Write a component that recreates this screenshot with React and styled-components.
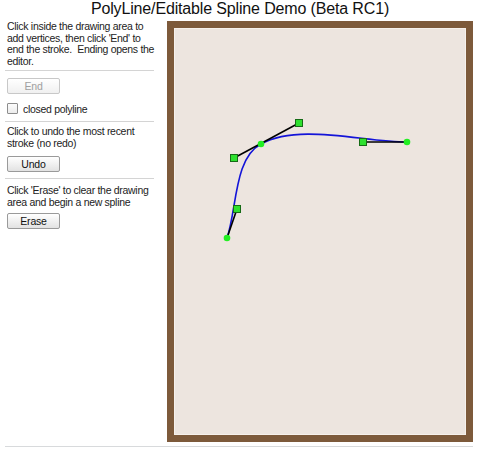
import React from 'react';
import styled, { createGlobalStyle } from 'styled-components';

const GlobalStyle = createGlobalStyle`
  body {
    margin: 0;
    background: #fff;
    font-family: "Liberation Sans", Arial, sans-serif;
    color: #222;
  }
`;

const Page = styled.div`
  width: 480px;
`;

const Title = styled.h1`
  margin: 0;
  height: 21px;
  font-size: 16px;
  font-weight: normal;
  letter-spacing: -0.15px;
  line-height: 18px;
  text-align: center;
  color: #111;
`;

const Main = styled.div`
  display: flex;
  align-items: flex-start;
  padding-left: 5px;
`;

const Panel = styled.div`
  display: flex;
  flex-direction: column;
  width: 149px;
  margin-right: 13px;
`;

const Note = styled.div`
  font-size: 10.5px;
  letter-spacing: -0.3px;
  line-height: 11.7px;
  padding-left: 2px;
  margin-top: ${p => p.$top || 0}px;
  white-space: pre;
`;

const Rule = styled.div`
  border-top: 1px solid #d4d4d4;
  margin-top: ${p => p.$top || 0}px;
`;

const Button = styled.button`
  width: 53px;
  height: 16px;
  margin: ${p => p.$top || 0}px 0 0 2px;
  padding: 0;
  font-family: "Liberation Sans", Arial, sans-serif;
  font-size: 10.5px;
  letter-spacing: -0.2px;
  color: ${p => (p.disabled ? '#a0a0a0' : '#111')};
  background: linear-gradient(to bottom, #ffffff, ${p => (p.disabled ? '#f0f0f0' : '#e2e2e2')});
  border: 1px solid ${p => (p.disabled ? '#c8c8c8' : '#9a9a9a')};
  border-radius: 2px;
`;

const CheckRow = styled.label`
  display: flex;
  align-items: center;
  gap: 5px;
  margin: 9px 0 0 2px;
  font-size: 10.5px;
  letter-spacing: -0.3px;
  line-height: 12px;
`;

const Box = styled.span`
  width: 9px;
  height: 9px;
  border: 1px solid #8d8d8d;
  border-radius: 1px;
  background: linear-gradient(to bottom, #fcfcfc, #ececec);
`;

const Frame = styled.div`
  width: 292px;
  height: 407px;
  border: 7px solid #7d5a3b;
  background: #ede5df;
  box-shadow: inset 0 0 0 1px #f6f1ec;
`;

const BottomRule = styled.div`
  margin: 4px 7px 0 5px;
  border-top: 1px solid #d8dadc;
`;

const pts = {
  a: [53, 210],
  a1: [63, 181],
  b0: [60, 130],
  b: [87, 116],
  b1: [125, 95],
  c0: [189, 114],
  c: [233, 114]
};

const Handle = ({ p }) => (
  <rect x={p[0] - 3.5} y={p[1] - 3.5} width="7" height="7" fill="#2ee02e" stroke="#166b16" strokeWidth="1" />
);

const Vertex = ({ p }) => <circle cx={p[0]} cy={p[1]} r="3.3" fill="#22ee22" />;

const Spline = () => {
  const { a, a1, b0, b, b1, c0, c } = pts;
  const d = `M${a} C${a1} ${b0} ${b} C${b1} ${c0} ${c}`;
  return (
    <svg width="292" height="407">
      <path d={d} fill="none" stroke="#1414d8" strokeWidth="1.6" />
      <line x1={a[0]} y1={a[1]} x2={a1[0]} y2={a1[1]} stroke="#000" strokeWidth="1.6" />
      <line x1={b0[0]} y1={b0[1]} x2={b1[0]} y2={b1[1]} stroke="#000" strokeWidth="1.6" />
      <line x1={c0[0]} y1={c0[1]} x2={c[0]} y2={c[1]} stroke="#000" strokeWidth="1.6" />
      <Handle p={a1} />
      <Handle p={b0} />
      <Handle p={b1} />
      <Handle p={c0} />
      <Vertex p={a} />
      <Vertex p={b} />
      <Vertex p={c} />
    </svg>
  );
};

export default function App() {
  return (
    <Page>
      <GlobalStyle />
      <Title>PolyLine/Editable Spline Demo (Beta RC1)</Title>
      <Main>
        <Panel>
          <Note>{"Click inside the drawing area to\nadd vertices, then click 'End' to\nend the stroke.  Ending opens the\neditor."}</Note>
          <Rule $top={2} />
          <Button disabled $top={7}>End</Button>
          <CheckRow>
            <Box />
            closed polyline
          </CheckRow>
          <Rule $top={6} />
          <Note $top={4}>{'Click to undo the most recent\nstroke (no redo)'}</Note>
          <Button $top={7}>Undo</Button>
          <Rule $top={6} />
          <Note $top={6}>{"Click 'Erase' to clear the drawing\narea and begin a new spline"}</Note>
          <Button $top={4}>Erase</Button>
        </Panel>
        <Frame>
          <Spline />
        </Frame>
      </Main>
      <BottomRule />
    </Page>
  );
}
